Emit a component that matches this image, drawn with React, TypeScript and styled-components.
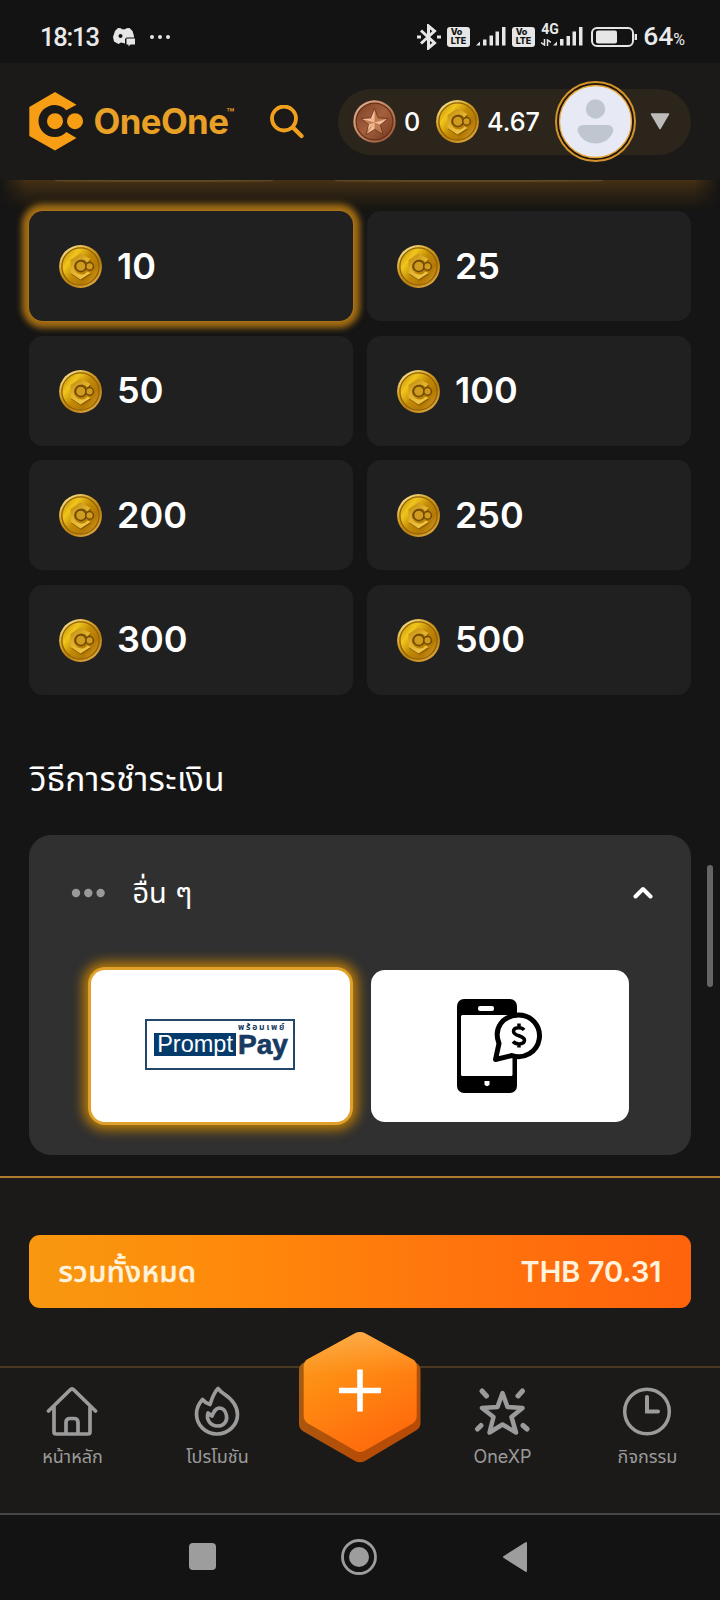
import React from "react";
import styled, { createGlobalStyle } from "styled-components";

const GlobalStyle = createGlobalStyle`
  * { box-sizing: border-box; }
  body { margin: 0; background: #151515; }
`;

const thai = `Inter, "Noto Sans Thai", "Noto Sans", "Liberation Sans", sans-serif`;

const Screen = styled.div`
  width: 720px;
  height: 1600px;
  display: flex;
  flex-direction: column;
  overflow: hidden;
  position: relative;
  background: #151515;
  color: #fff;
  font-family: ${thai};
`;

/* ---------- status bar ---------- */
const StatusBar = styled.div`
  height: 63px;
  flex: none;
  display: flex;
  align-items: center;
  justify-content: space-between;
  padding: 10px 35px 0 40px;
  background: #131313;
  color: #e9e9e9;
  font-family: Roboto, sans-serif;
`;
const StatusGroup = styled.div<{ $gap: number }>`
  display: flex;
  align-items: center;
  gap: ${(p) => p.$gap}px;
`;
const Clock = styled.span`
  font-size: 25.5px;
  line-height: 30px;
  font-weight: 500;
  letter-spacing: -1.2px;
`;
const Percent = styled.span`
  font-size: 26.5px;
  line-height: 30px;
  font-weight: 500;
  padding-top: 2px;
  small { font-size: 16px; font-weight: 400; }
`;
const Volte = styled.span`
  width: 23px;
  height: 20px;
  border-radius: 3px;
  background: #e6e6e6;
  color: #131313;
  display: flex;
  flex-direction: column;
  justify-content: center;
  padding-left: 3.500px;
  font: 800 9px/8.5px Inter, sans-serif;
  letter-spacing: -0.2px;
`;

/* ---------- header ---------- */
const Header = styled.header`
  height: 117px;
  flex: none;
  display: flex;
  align-items: center;
  padding: 0 29px;
  background: #1b1a18;
  position: relative;
  z-index: 1;
`;
const Brand = styled.div`
  display: flex;
  align-items: center;
  width: 241px;
  gap: 9.5px;
  padding-bottom: 1px;
`;
const BrandName = styled.div`
  display: flex;
  color: #e8a026;
  font: 700 34.8px/40px Inter, sans-serif;
  letter-spacing: -0.6px;
  sup { font-size: 13px; font-weight: 500; line-height: 24px; letter-spacing: 0; margin-left: -2px; }
`;
const Wallet = styled.div`
  margin-left: auto;
  width: 353px;
  height: 66px;
  border-radius: 33px;
  background: #2c251c;
  display: flex;
  align-items: center;
  padding-left: 15px;
`;
const Balance = styled.span<{ $width: number }>`
  width: ${(p) => p.$width}px;
  padding-left: 8px;
  font: 500 25.2px/32px Inter, sans-serif;
`;
const Avatar = styled.div`
  width: 81px;
  height: 81px;
  flex: none;
  border-radius: 50%;
  border: 2px solid #d5932c;
  background: #20160a;
  display: flex;
  align-items: center;
  justify-content: center;
  margin: 0 14px 0 0;
`;

/* ---------- content ---------- */
const Content = styled.main`
  height: 996px;
  flex: none;
  padding: 31.3px 29.4px 0;
  position: relative;
`;
const TopGlow = styled.div`
  position: absolute;
  top: 0;
  left: 0;
  right: 0;
  height: 32px;
  background: linear-gradient(#453013, #2b2113 45%, #1b1812 80%, #15151500);
  mask-image: linear-gradient(90deg, transparent, #000 26px, #000 694px, transparent);
`;
const Peek = styled.div<{ $left: number; $width: number }>`
  position: absolute;
  top: 0;
  left: ${(p) => p.$left}px;
  width: ${(p) => p.$width}px;
  height: 2px;
  border-radius: 0 0 50% 50%;
  background: #5d4826;
`;
const AmountGrid = styled.div`
  display: grid;
  grid-template-columns: 1fr 1fr;
  grid-auto-rows: 109.9px;
  gap: 14.7px;
  position: relative;
`;
const AmountCard = styled.button<{ $selected?: boolean }>`
  border: 0;
  border-radius: 14px;
  background: #202020;
  color: #fff;
  display: flex;
  align-items: center;
  gap: 15px;
  padding: 1px 0 0 29.6px;
  font: 600 36px/44px Inter, sans-serif;
  box-shadow: ${(p) => (p.$selected ? "0 0 0 1px #a87018, 0 0 6px 7px #a36d13" : "none")};
`;
const AmountValue = styled.span`
  padding-bottom: 2px;
`;
const Heading = styled.h2`
  margin: 60.500px 0 0 0.500px;
  height: 48px;
  font: 400 33.5px/48px ${thai};
  letter-spacing: 0.32px;
  white-space: nowrap;
`;
const Panel = styled.section`
  margin-top: 31.3px;
  height: 320px;
  border-radius: 22px;
  background: #303030;
  padding: 0 61.5px 0 62px;
`;
const PanelHead = styled.div`
  height: 135.5px;
  display: flex;
  align-items: center;
  margin: 0 -24px 0 -20.5px;
  padding-bottom: 19px;
`;
const PanelTitle = styled.span`
  flex: 1;
  margin-left: 26.5px;
  padding-top: 1px;
  font: 400 29px/40px ${thai};
`;
const Methods = styled.div`
  display: grid;
  grid-template-columns: 1fr 1fr;
  gap: 21px;
`;
const Method = styled.button<{ $selected?: boolean }>`
  height: 152px;
  border: 0;
  padding: 0;
  border-radius: 14px;
  background: #fff;
  display: flex;
  align-items: center;
  justify-content: center;
  box-shadow: ${(p) => (p.$selected ? "0 0 0 3px #e0a02c, 0 0 12px 8px #b87a08" : "none")};
`;
const PromptPay = styled.div`
  width: 150px;
  height: 51px;
  border: 2px solid #24466b;
  display: flex;
  padding: 12px 0 0 7px;
  margin: -3px 0 0 -1px;
`;
const Prompt = styled.span`
  width: 82px;
  height: 23px;
  background: #053b6b;
  color: #fff;
  text-align: center;
  font: 400 23.5px/22px "Liberation Sans", sans-serif;
`;
const PayColumn = styled.div`
  margin: -11px 0 0 2px;
  color: #173a63;
  text-align: left;
`;
const PayThai = styled.div`
  font: 700 8.5px/10px ${thai};
  letter-spacing: 1.8px;
  height: 11px;
  white-space: nowrap;
`;
const Pay = styled.div`
  font: 700 28px/24px "Liberation Sans", sans-serif;
  -webkit-text-stroke: 0.7px #173a63;
`;
const ScrollThumb = styled.div`
  position: absolute;
  left: 707px;
  top: 865px;
  width: 6px;
  height: 122px;
  border-radius: 3px;
  background: #656565;
`;

/* ---------- checkout and tabs ---------- */
const Checkout = styled.section`
  height: 190px;
  flex: none;
  border-top: 2px solid #b07a2c;
  background: #1b1a18;
  padding: 57px 29.4px 0;
`;
const TotalButton = styled.button`
  width: 100%;
  height: 73px;
  border: 0;
  border-radius: 11px;
  background: linear-gradient(90deg, #f7980f, #ff8a0b 30%, #ff770d 60%, #ff630c);
  color: #fff3dd;
  display: flex;
  align-items: center;
  justify-content: space-between;
  padding: 1px 29px 0;
  font: 600 29px/40px ${thai};
`;
const TotalLabel = styled.span`
  font-weight: 500;
  letter-spacing: 0.5px;
  -webkit-text-stroke: 0.5px #fff3dd;
`;
const Tabs = styled.nav`
  height: 149px;
  flex: none;
  border-top: 2px solid #4a3822;
  border-bottom: 2px solid #464646;
  background: #1b1a18;
  display: grid;
  grid-template-columns: 145px 145px 140px 145px 145px;
  position: relative;
`;
const Tab = styled.a`
  display: flex;
  flex-direction: column;
  align-items: center;
  padding-top: 18px;
  color: #9b9b9b;
  font: 400 18px/26px ${thai};
  gap: 6px;
  svg { margin-right: 1px; }
`;
const AddButton = styled.button`
  position: absolute;
  left: 298px;
  top: -37px;
  border: 0;
  padding: 0;
  background: none;
  line-height: 0;
`;
const SystemNav = styled.div`
  flex: 1;
  display: flex;
  align-items: center;
  justify-content: center;
  gap: 125px;
  padding: 0 3px 2px 0;
  background: #131313;
`;

const coinGlyph = "M21.500 8.500L31.500 14 28.500 17.500A7.500 7.500 0 1 0 28.500 26.500L31.500 28 21.500 34.500 11.500 28V15Z";

const CoinIcon = () => (
  <svg width="43" height="43" viewBox="0 0 43 43">
    <defs>
      <linearGradient id="goldRim" x1="0.1" y1="0" x2="0.8" y2="1">
        <stop offset="0" stopColor="#fff0a8" />
        <stop offset="0.35" stopColor="#d9a326" />
        <stop offset="0.65" stopColor="#b87c0c" />
        <stop offset="1" stopColor="#e6ac45" />
      </linearGradient>
      <linearGradient id="goldFace" x1="0" y1="0.1" x2="1" y2="0.9">
        <stop offset="0" stopColor="#c08c06" />
        <stop offset="0.25" stopColor="#f0c51c" />
        <stop offset="0.5" stopColor="#c28a06" />
        <stop offset="0.75" stopColor="#b37904" />
        <stop offset="1" stopColor="#dca024" />
      </linearGradient>
      <linearGradient id="goldMark" x1="0" y1="0" x2="0.6" y2="1">
        <stop offset="0" stopColor="#b98308" />
        <stop offset="0.5" stopColor="#e2b12c" />
        <stop offset="1" stopColor="#efc545" />
      </linearGradient>
    </defs>
    <circle cx="21.5" cy="21.5" r="21.4" fill="url(#goldRim)" />
    <circle cx="21.5" cy="21.5" r="18.6" fill="url(#goldFace)" stroke="#8e6205" strokeWidth="1.3" />
    <path d={coinGlyph} fill="#8a5c03" transform="translate(.6 1.2)" />
    <path d={coinGlyph} fill="url(#goldMark)" />
    <circle cx="21.8" cy="21.2" r="5.400" fill="#cf9c20" stroke="#714a04" strokeWidth="1.7" />
    <circle cx="30.6" cy="21.400" r="3.800" fill="#d29b20" stroke="#714a04" strokeWidth="1.5" />
  </svg>
);

const StarCoin = () => (
  <svg width="43" height="43" viewBox="0 0 43 43">
    <defs>
      <linearGradient id="bronze" x1="0" y1="0" x2="1" y2="1">
        <stop offset="0" stopColor="#7b4027" />
        <stop offset="0.5" stopColor="#a4603d" />
        <stop offset="1" stopColor="#74381f" />
      </linearGradient>
      <linearGradient id="bronzeRim" x1="0" y1="0" x2="1" y2="1">
        <stop offset="0" stopColor="#f0b795" />
        <stop offset="1" stopColor="#8f4d2d" />
      </linearGradient>
    </defs>
    <circle cx="21.5" cy="21.5" r="21.2" fill="url(#bronzeRim)" />
    <circle cx="21.5" cy="21.5" r="18.4" fill="url(#bronze)" stroke="#663016" strokeWidth="1.2" />
    <path d="M21.5 8.500l3.700 9.300 9.800.7-7.600 6.300 2.600 9.700-8.500-5.300-8.500 5.300 2.600-9.700L8 18.500l9.800-.7z" fill="#c07a50" stroke="#6b351b" strokeWidth=".9" strokeLinejoin="round" />
    <path d="M21.5 9.500V22.500L18 18.300zM34 19l-12.500 3.500 5.500 2zM9 19l12.500 3.500L17.800 18.500zM21.5 22.500V29l-7.800 4.800zM21.500 22.500l-5.500 2 -1.500 6z" fill="#f2bd98" />
  </svg>
);

const Signal = ({ small }: { small?: boolean }) => (
  <svg width="30" height="19" viewBox="0 0 30 19" fill="#e6e6e6">
    <path d={small
      ? "M0 18.500l4-4v4zM7 12h3.500v6.500H7zM13.500 9h3.500v9.500h-3.500zM19.500 4.500H23v14h-3.500zM26 0h3.500v18.500H26z"
      : "M0 18.500l4-4v4zM7 12.500h3.500v6H7zM13.500 8.500h3.500v10h-3.500zM19.500 4.500H23v14h-3.500zM26 0h3.500v18.500H26z"} />
  </svg>
);

const FourG = styled.span`
  position: relative;
  display: flex;
  padding-left: 12px;
  b { position: absolute; left: 0; top: -4px; font: 700 14px/13px Roboto, sans-serif; background: #131313; }
  .arrows { position: absolute; left: 0; bottom: 0; }
`;

const amounts = [10, 25, 50, 100, 200, 250, 300, 500];

export default function App() {
  return (
    <Screen>
      <GlobalStyle />
      <StatusBar>
        <StatusGroup $gap={14}>
          <Clock>18:13</Clock>
          <svg width="22" height="20" viewBox="0 0 22 20">
            <path d="M5 1l3 .3.8 1h3.500l1-1L16.500 1l3 3 1.500 5v1.500h-7.500l-1.500 1.500v4.500L8 15.500 5.500 17 1 14.500 0 10l2-6z" fill="#e6e6e6" />
            <circle cx="7.500" cy="9" r="2" fill="#131313" />
            <path d="M13.500 11.500H22v6h-4.500l-2 2v-2h-2z" fill="#e6e6e6" />
          </svg>
          <svg width="22" height="6" viewBox="3 0 22 6" fill="#e6e6e6">
            <circle cx="6" cy="3" r="2" /><circle cx="14" cy="3" r="2" /><circle cx="22" cy="3" r="2" />
          </svg>
        </StatusGroup>
        <StatusGroup $gap={6}>
          <svg width="24" height="26" viewBox="0 0 24 26" fill="none" stroke="#e6e6e6" strokeWidth="3">
            <path d="M4 6.500l13.500 12.500-6 5V2l6 5L4 19.500" />
            <path d="M0 13h4M20 13h4" />
          </svg>
          <Volte><span>Vo</span><span>LTE</span></Volte>
          <Signal />
          <Volte><span>Vo</span><span>LTE</span></Volte>
          <FourG>
            <Signal small />
            <b>4G</b>
            <svg className="arrows" width="10" height="7" viewBox="0 0 10 7" fill="none" stroke="#e6e6e6" strokeWidth="1.500">
              <path d="M3.500 0v6L0 3.500M6.500 7V1L10 3.500" />
            </svg>
          </FourG>
          <svg width="48" height="22" viewBox="1 0 48 22">
            <rect x="4" y="2" width="41" height="18" rx="5" fill="none" stroke="#e6e6e6" strokeWidth="2" />
            <rect x="8" y="4.500" width="21" height="13" rx="2" fill="#e6e6e6" />
            <path d="M47.800 8v6" stroke="#e6e6e6" strokeWidth="2.400" />
          </svg>
          <Percent>64<small>%</small></Percent>
        </StatusGroup>
      </StatusBar>

      <Header>
        <Brand>
          <svg width="55" height="60" viewBox="29 91 55 60" fill="#f79e14">
            <path d="M55 92l21.500 12.700-10.200 5.600a16 16 0 1 0 0 21.600l10.200 6.100L55 150.500 29.300 136v-29z" />
            <circle cx="55" cy="121.200" r="8" />
            <circle cx="75" cy="121.200" r="8" />
          </svg>
          <BrandName>OneOne<sup>™</sup></BrandName>
        </Brand>
        <svg width="34" height="34" viewBox="0 0 34 34" fill="none" stroke="#f0a01c" strokeWidth="3.800" strokeLinecap="round">
          <circle cx="14" cy="13.500" r="12" />
          <path d="M23 22.500l8.500 8.500" strokeWidth="4.200" />
        </svg>
        <Wallet>
          <StarCoin />
          <Balance $width={40}>0</Balance>
          <CoinIcon />
          <Balance $width={76}>4.67</Balance>
          <Avatar>
            <svg width="75" height="75" viewBox="0 0 75 75">
              <circle cx="37.500" cy="37.500" r="36" fill="#e7eaf4" stroke="#e7a53b" strokeWidth="1.300" />
              <circle cx="37.500" cy="25" r="9.700" fill="#bfc6d0" />
              <path d="M26 41h23c5 0 7 3.500 6 7-3 7-9.500 11.500-17.500 11.500S23 55 20 48c-1.500-4 1-7 6-7z" fill="#bfc6d0" />
            </svg>
          </Avatar>
          <svg width="20" height="17" viewBox="0 0 20 17">
            <path d="M1.500 1h17L10 15.500z" fill="#bdbcba" stroke="#bdbcba" strokeWidth="1.500" strokeLinejoin="round" />
          </svg>
        </Wallet>
      </Header>

      <Content>
        <TopGlow />
        <Peek $left={55} $width={218} />
        <Peek $left={335} $width={268} />
        <AmountGrid>
          {amounts.map((n) => (
            <AmountCard key={n} $selected={n === 10}>
              <CoinIcon />
              <AmountValue>{n}</AmountValue>
            </AmountCard>
          ))}
        </AmountGrid>
        <Heading>วิธีการชำระเงิน</Heading>
        <Panel>
          <PanelHead>
            <svg width="35" height="10" viewBox="0 0 35 10" fill="#999">
              <circle cx="5" cy="5" r="4.200" /><circle cx="17.300" cy="5" r="4.200" /><circle cx="29.600" cy="5" r="4.200" />
            </svg>
            <PanelTitle>อื่น ๆ</PanelTitle>
            <svg width="20" height="13" viewBox="0 0 20 13" fill="none" stroke="#fff" strokeWidth="4" strokeLinecap="round" strokeLinejoin="round">
              <path d="M2.500 10.500L10 3l7.500 7.500" />
            </svg>
          </PanelHead>
          <Methods>
            <Method $selected>
              <PromptPay>
                <Prompt>Prompt</Prompt>
                <PayColumn>
                  <PayThai>พร้อมเพย์</PayThai>
                  <Pay>Pay</Pay>
                </PayColumn>
              </PromptPay>
            </Method>
            <Method>
              <svg width="88" height="96" viewBox="0 0 88 96">
                <rect x="1" y="1" width="60" height="94" rx="7" fill="#000" />
                <rect x="5" y="17" width="51.500" height="61" rx="1.500" fill="#fff" />
                <rect x="22" y="8" width="16" height="5" rx="2" fill="#fff" />
                <path d="M28.500 83h5v3.500l-1.500 1.500h-2l-1.500-1.500z" fill="#fff" />
                <path d="M43 45.500C37 30 47 17.500 62.500 17A20.800 20.800 0 1 1 56 57.500L39.500 61.500z" fill="#fff" stroke="#000" strokeWidth="5" strokeLinejoin="round" />
                <path d="M68 32c-2-3-10.500-3.500-10.500 1.500 0 5 11 3.500 11 8.800 0 4.500-8.500 4.700-11.500 1.200M63 25.500v4M63 45v4.500" fill="none" stroke="#000" strokeWidth="3.500" />
              </svg>
            </Method>
          </Methods>
        </Panel>
      </Content>
      <ScrollThumb />

      <Checkout>
        <TotalButton>
          <TotalLabel>รวมทั้งหมด</TotalLabel>
          <span>THB 70.31</span>
        </TotalButton>
      </Checkout>
      <Tabs>
        <Tab>
          <svg width="54" height="52" viewBox="0 0 54 52" fill="none" stroke="#9b9b9b" strokeWidth="3.700" strokeLinecap="round" strokeLinejoin="round">
            <path d="M3.500 25L25 4q2-2 4 0l21.500 21M9 21v25q0 2 2.500 2h31Q45 48 45 46V21M21 47.500V36.500q0-4 4-4h4q4 0 4 4V47.500" />
          </svg>
          หน้าหลัก
        </Tab>
        <Tab>
          <svg width="54" height="52" viewBox="0 0 54 52" fill="none" stroke="#9b9b9b" strokeWidth="3.700" strokeLinecap="round" strokeLinejoin="round">
            <path d="M28 2.500C23.500 7 22 12.500 20 18.500 17 17.500 14.500 16 12.500 13.500 8 18.500 6.500 23 6.500 28c0 11 9 20 20.500 20S47.500 39 47.500 28.500C47.500 19 41 12.500 33.500 7.500 31 6 30 5 28 2.500z" />
            <path d="M22 30l-4-3c-2 6 2 13 9.500 13 6.500 0 10-5 9-10.500C35.500 24.500 32.500 22 29 22c-3.500.5-5 3.500-7 8z" />
          </svg>
          โปรโมชัน
        </Tab>
        <span />
        <Tab>
          <svg width="56" height="52" viewBox="0 0 56 52" fill="none" stroke="#9b9b9b" strokeWidth="4.500" strokeLinecap="round" strokeLinejoin="round">
            <path d="M28.500 7l5 14L48.500 22 37.500 31l4.500 15.500-13.500-8-13 8L19.500 31 8 22l15.500-1z" />
            <path d="M8 5l4.500 5M48.500 5L44 10M3.500 43L7 39.500M53 43l-4-3.500" strokeWidth="5" />
          </svg>
          OneXP
        </Tab>
        <Tab>
          <svg width="52" height="52" viewBox="0 0 52 52" fill="none" stroke="#9b9b9b" strokeWidth="3.500" strokeLinecap="round">
            <circle cx="26" cy="25.500" r="22.300" /><path d="M26 11v14.500h11" strokeWidth="4" />
          </svg>
          กิจกรรม
        </Tab>
        <AddButton aria-label="add">
          <svg width="124" height="134" viewBox="0 0 124 134">
            <defs>
              <linearGradient id="addFace" x1="0.2" y1="0" x2="0.7" y2="1">
                <stop offset="0" stopColor="#f99d24" />
                <stop offset="0.35" stopColor="#ff8c13" />
                <stop offset="1" stopColor="#ff680b" />
              </linearGradient>
              <linearGradient id="addEdge" x1="0" y1="0" x2="0.8" y2="1">
                <stop offset="0" stopColor="#a36011" />
                <stop offset="1" stopColor="#b94905" />
              </linearGradient>
              <linearGradient id="addShine" x1="0" y1="0" x2="0" y2="1">
                <stop offset="0" stopColor="#ffc47a" stopOpacity="0.450" />
                <stop offset="0.35" stopColor="#ffb366" stopOpacity="0" />
              </linearGradient>
            </defs>
            <path d="M58 14q4-2 8 0l52.500 18q4 2.500 4 7v53q0 5-4.500 7.500L67 130q-5 2.500-10 0L5.500 100.500q-4.500-2.500-4.500-7.500V39q0-4.500 4-7z" fill="url(#addEdge)" />
            <path d="M57.500 2q4.500-2 9 0L115 28.500q3.700 2.500 3.700 6.500v50q0 5-4 7.500L66.500 119.700q-4.500 2.500-9 0L10 92.500q-4.300-2.500-4.300-7.500V35q0-4 3.300-6.500z" fill="url(#addFace)" />
            <path d="M57.500 2q4.500-2 9 0L115 28.500q3.700 2.500 3.700 6.500v50q0 5-4 7.500L66.500 119.700q-4.500 2.500-9 0L10 92.500q-4.300-2.500-4.300-7.500V35q0-4 3.300-6.500z" fill="url(#addShine)" />
            <path d="M41 59.500h42M62 38.500v42" stroke="#fff" strokeWidth="5.600" />
          </svg>
        </AddButton>
      </Tabs>
      <SystemNav>
        <svg width="27" height="27"><rect width="27" height="27" rx="4" fill="#9d9d9d" /></svg>
        <svg width="36" height="36" fill="#9d9d9d">
          <circle cx="18" cy="18" r="16.500" fill="none" stroke="#9d9d9d" strokeWidth="2.800" /><circle cx="18" cy="18" r="10" />
        </svg>
        <svg width="26" height="32"><path d="M24 2v28L2 16z" fill="#9d9d9d" stroke="#9d9d9d" strokeWidth="2" strokeLinejoin="round" /></svg>
      </SystemNav>
    </Screen>
  );
}
